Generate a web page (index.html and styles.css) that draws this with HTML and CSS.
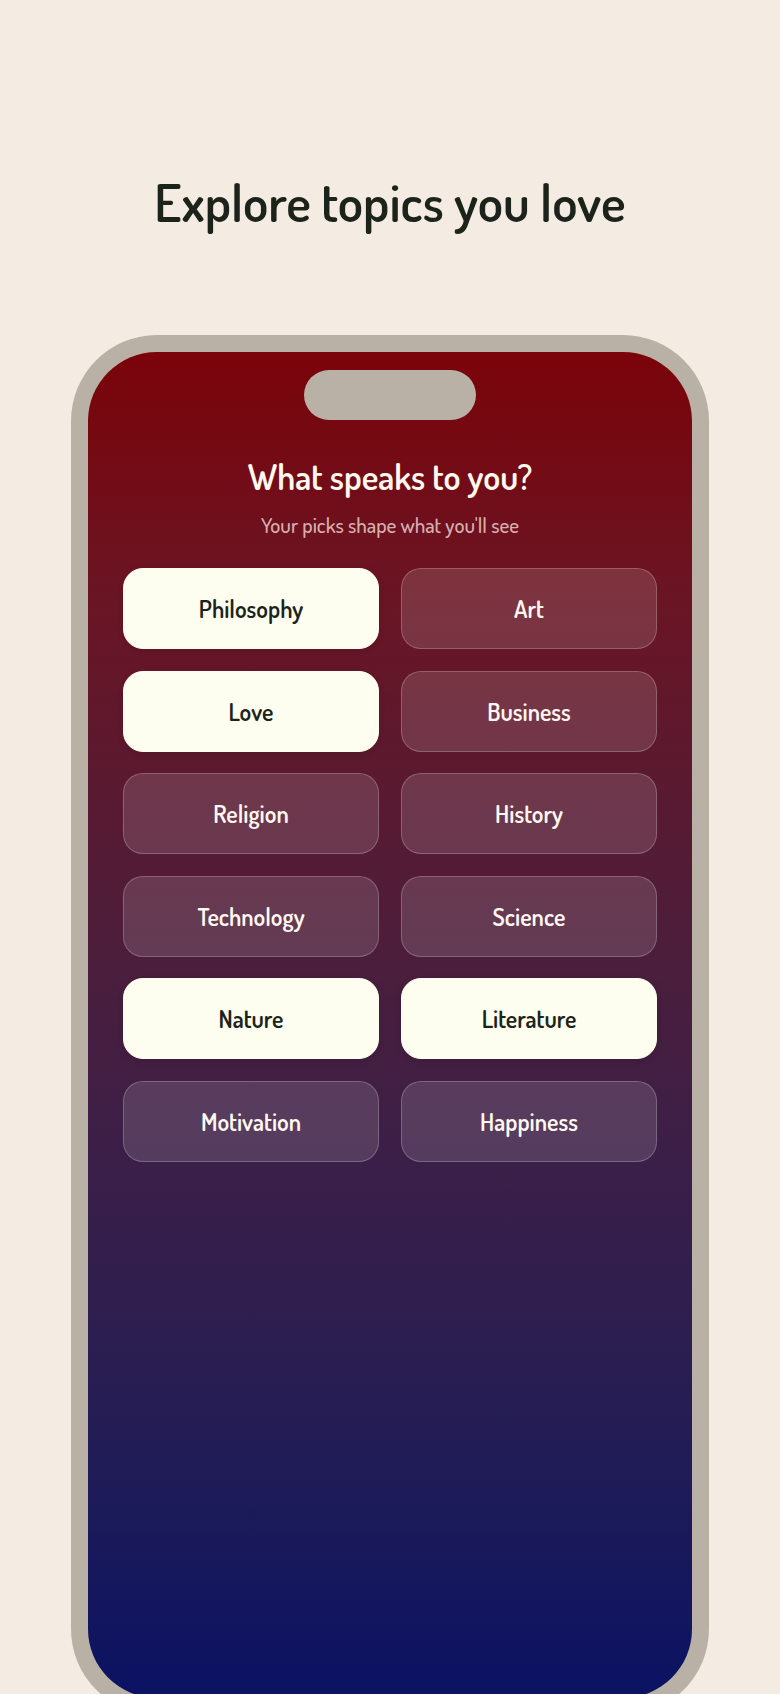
FILE: index.html
```html
<!DOCTYPE html>
<html lang="en">
<head>
<meta charset="utf-8">
<title>Explore topics you love</title>
<link rel="stylesheet" href="styles.css">
</head>
<body>
<main class="page">
  <h1 class="page-title">Explore topics you love</h1>
  <div class="phone">
    <div class="screen">
      <div class="island"></div>
      <h2 class="screen-title">What speaks to you?</h2>
      <p class="screen-sub">Your picks shape what you'll see</p>
      <div class="topics">
        <button class="topic selected">Philosophy</button>
        <button class="topic">Art</button>
        <button class="topic selected">Love</button>
        <button class="topic">Business</button>
        <button class="topic">Religion</button>
        <button class="topic">History</button>
        <button class="topic">Technology</button>
        <button class="topic">Science</button>
        <button class="topic selected">Nature</button>
        <button class="topic selected">Literature</button>
        <button class="topic">Motivation</button>
        <button class="topic">Happiness</button>
      </div>
    </div>
  </div>
</main>
</body>
</html>
```
FILE: styles.css
```css
* { box-sizing: border-box; }

html, body {
  margin: 0;
  padding: 0;
  background: #f4ece3;
}

body {
  font-family: "Dosis", "Liberation Sans", sans-serif;
  overflow: hidden;
}

.page {
  display: flex;
  flex-direction: column;
  align-items: center;
  padding-top: 170px;
}

.page-title {
  margin: 0;
  font-size: 52px;
  line-height: 64px;
  font-weight: 600;
  color: #1b231b;
  text-align: center;
}

.phone {
  margin-top: 101px;
  width: 638px;
  height: 1380px;
  padding: 17px;
  background: #b9b1a5;
  border-radius: 86px;
}

.screen {
  height: 100%;
  border-radius: 69px;
  padding: 18px 35px 0;
  display: flex;
  flex-direction: column;
  align-items: center;
  background: linear-gradient(180deg,
    #7b0309 0%,
    #6a1524 18%,
    #4b1e3c 45.5%,
    #3b1f48 60%,
    #2b1e50 74%,
    #1d1b58 85%,
    #0b1263 100%);
}

.island {
  width: 172px;
  height: 50px;
  border-radius: 25px;
  background: #b9b1a5;
  flex: none;
}

.screen-title {
  margin: 34px 0 0;
  font-size: 35px;
  line-height: 44px;
  font-weight: 600;
  color: #fff8ee;
  text-align: center;
}

.screen-sub {
  margin: 13px 0 0;
  font-size: 21px;
  line-height: 28px;
  font-weight: 500;
  color: rgba(255, 236, 234, 0.74);
  text-align: center;
}

.topics {
  margin-top: 29px;
  width: 100%;
  display: grid;
  grid-template-columns: 1fr 1fr;
  column-gap: 22px;
  row-gap: 21.6px;
}

.topic {
  height: 81px;
  border-radius: 20px;
  border: 1px solid rgba(255, 255, 255, 0.22);
  background: rgba(255, 255, 255, 0.13);
  color: #fff8f0;
  font-family: "Dosis", "Liberation Sans", sans-serif;
  font-size: 24px;
  font-weight: 600;
  display: flex;
  align-items: center;
  justify-content: center;
  padding: 0;
}

.topic.selected {
  background: #fdfdf0;
  border-color: #fdfdf0;
  color: #1c2419;
  box-shadow: 0 2px 6px rgba(0, 0, 0, 0.12);
}
```
